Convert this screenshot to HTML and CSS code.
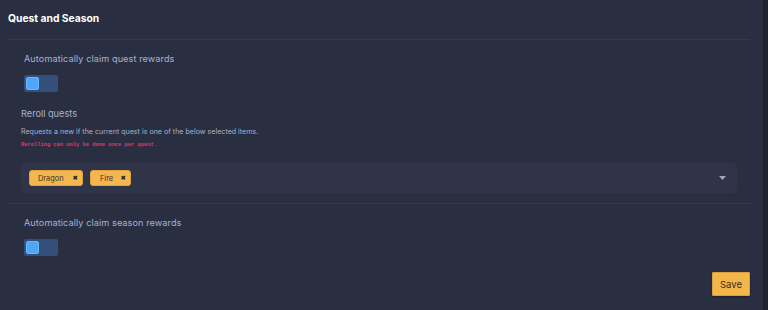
FILE: index.html
```html
<!DOCTYPE html>
<html>
<head>
<meta charset="utf-8">
<link rel="stylesheet" href="styles.css">
</head>
<body>
<div class="page">
  <h1 class="title">Quest and Season</h1>
  <div class="divider"></div>
  <section class="group">
    <div class="label">Automatically claim quest rewards</div>
    <div class="toggle"><span class="knob"></span></div>
  </section>
  <section class="reroll">
    <div class="sub-title">Reroll quests</div>
    <div class="desc">Requests a new if the current quest is one of the below selected items.</div>
    <div class="warn">Rerolling can only be done once per quest.</div>
    <div class="select">
      <div class="tags">
        <span class="tag">Dragon<span class="x">✖</span></span>
        <span class="tag">Fire<span class="x">✖</span></span>
      </div>
      <svg class="caret" width="7" height="4" viewBox="0 0 7 4"><path d="M0 0h7L3.5 4z" fill="#a0a6b3"/></svg>
    </div>
  </section>
  <div class="divider second"></div>
  <section class="group season">
    <div class="label">Automatically claim season rewards</div>
    <div class="toggle"><span class="knob"></span></div>
  </section>
  <div class="actions"><button class="save">Save</button></div>
</div>
</body>
</html>
```
FILE: styles.css
```css
html, body {
  margin: 0;
  padding: 0;
  background: #1f2330;
  height: 310px;
  overflow: hidden;
}
.page {
  width: 763px;
  height: 310px;
  box-sizing: border-box;
  background: #292f41;
  padding: 10px 13px 0 8px;
  font-family: Inter, "Noto Sans", sans-serif;
}
.title {
  margin: 0;
  font-size: 10.3px;
  line-height: 16px;
  font-weight: 700;
  color: #ffffff;
}
.divider {
  height: 1px;
  background: #333a4d;
  margin-top: 13px;
}
.group {
  padding: 11px 0 0 16px;
}
.label {
  font-size: 9.1px;
  line-height: 16px;
  color: #a7b2cf;
  letter-spacing: 0.1px;
}
.toggle {
  margin-top: 8px;
  width: 34px;
  height: 17px;
  box-sizing: border-box;
  padding: 2px;
  background: #34507a;
  border-radius: 2px;
  display: flex;
}
.knob {
  width: 13px;
  height: 13px;
  background: #4da6f6;
  border-radius: 2px;
  border: 0.5px solid #6cb8fa;
  box-sizing: border-box;
}
.reroll {
  padding: 14px 13px 0 13px;
}
.sub-title {
  font-size: 9.2px;
  line-height: 16px;
  color: #a7b2cf;
}
.desc {
  margin-top: 4px;
  font-size: 7.1px;
  line-height: 12px;
  color: #a7b2cf;
}
.warn {
  margin-top: 2px;
  font-family: "Liberation Mono", "DejaVu Sans Mono", monospace;
  font-size: 5.4px;
  line-height: 10px;
  font-weight: 700;
  color: #e0356c;
}
.select {
  margin-top: 13px;
  height: 30px;
  background: #2f3448;
  border-radius: 4px;
  display: flex;
  align-items: center;
  justify-content: space-between;
  padding: 0 10px 0 8px;
}
.tags {
  display: flex;
  gap: 7px;
}
.tag {
  height: 16px;
  box-sizing: border-box;
  background: #f4b74f;
  border: 1px solid #e0a23c;
  border-radius: 3px;
  display: inline-flex;
  align-items: center;
  padding: 0 4px 0 8px;
  font-size: 7.4px;
  color: #3b3222;
}
.tag:first-child { width: 54px; justify-content: space-between; }
.tag:last-child { width: 41px; justify-content: space-between; padding-left: 9px; }
.x {
  font-size: 6.5px;
  color: #222;
  font-family: "DejaVu Sans", sans-serif;
}
.caret {
  display: block;
  margin-right: 1px;
}
.second {
  margin-top: 10px;
}
.season {
  padding-top: 11px;
}
.actions {
  display: flex;
  justify-content: flex-end;
  margin-top: 16px;
}
.save {
  width: 38px;
  height: 24px;
  background: #f3b64b;
  border: 1px solid #d9a03c;
  border-radius: 1px;
  color: #3a2f1d;
  font-family: Inter, "Noto Sans", sans-serif;
  font-size: 9.5px;
  padding: 0;
  box-shadow: 0 1px 2px rgba(0,0,0,0.35);
}
```
